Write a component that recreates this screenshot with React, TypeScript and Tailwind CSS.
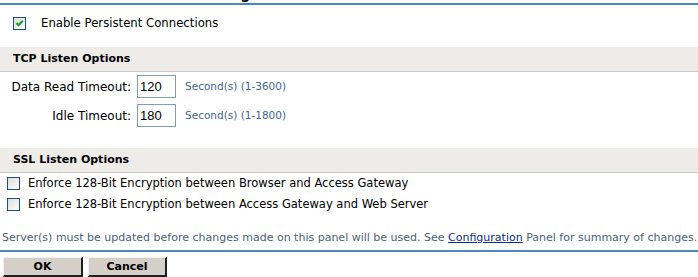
import React from 'react';

const font = { fontFamily: '"DejaVu Sans", Verdana, sans-serif' };

function CheckBox({ checked }: { checked?: boolean }) {
  return (
    <svg width="13" height="13" viewBox="0 0 13 13" className="shrink-0">
      <defs>
        <linearGradient id={checked ? 'cbg1' : 'cbg0'} x1="0" y1="0" x2="1" y2="1">
          <stop offset="0" stopColor="#dcdcd7" />
          <stop offset="1" stopColor="#ffffff" />
        </linearGradient>
      </defs>
      <rect x="0.5" y="0.5" width="12" height="12" fill={`url(#${checked ? 'cbg1' : 'cbg0'})`} stroke="#1c5180" />
      {checked && <path d="M3.5 6 L5.5 8.2 L9.8 3.8" fill="none" stroke="#21a121" strokeWidth="2.2" />}
    </svg>
  );
}

function SectionBar({ title }: { title: string }) {
  return (
    <div className="h-[25px] bg-[#eeece8] border-b border-[#c9c9c9] pl-[13px] flex items-center">
      <span className="text-[11px] font-bold text-black">{title}</span>
    </div>
  );
}

function TimeoutRow({ label, value, hint }: { label: string; value: string; hint: string }) {
  return (
    <div className="flex items-center h-[23px]">
      <span className="w-[131px] text-right text-[12px] text-black">{label}</span>
      <div className="ml-[6px] w-[39px] h-[23px] border border-[#7f9db9] bg-white flex items-center pl-[2px] text-black" style={{ fontFamily: '"Liberation Sans", Arial, sans-serif', fontSize: '13px' }}>
        {value}
      </div>
      <span className="ml-[9px] text-[10.5px] text-[#3f6590]">{hint}</span>
    </div>
  );
}

export default function App() {
  return (
    <div className="w-[698px] h-[277px] overflow-hidden bg-white" style={font}>
      <div className="h-[3px] overflow-hidden">
        <div className="-mt-[16px] pl-[13px] text-[14px] font-bold text-black whitespace-nowrap">Persistent Connection Settings</div>
      </div>
      <div className="h-[2px] bg-[#4a88bd]" />

      <div className="mt-[12px] pl-[13px] flex items-center h-[13px]">
        <CheckBox checked />
        <span className="ml-[15px] text-[11.7px] text-black">Enable Persistent Connections</span>
      </div>

      <div className="mt-[17px]">
        <SectionBar title="TCP Listen Options" />
      </div>

      <div className="mt-[3px] flex flex-col gap-[6px]">
        <TimeoutRow label="Data Read Timeout:" value="120" hint="Second(s) (1-3600)" />
        <TimeoutRow label="Idle Timeout:" value="180" hint="Second(s) (1-1800)" />
      </div>

      <div className="mt-[21px]">
        <SectionBar title="SSL Listen Options" />
      </div>

      <div className="pl-[7px] mt-[4px] flex flex-col gap-[8px]">
        <div className="flex items-center h-[13px]">
          <CheckBox />
          <span className="ml-[8px] text-[11.5px] text-black">Enforce 128-Bit Encryption between Browser and Access Gateway</span>
        </div>
        <div className="flex items-center h-[13px]">
          <CheckBox />
          <span className="ml-[8px] text-[11.5px] text-black">Enforce 128-Bit Encryption between Access Gateway and Web Server</span>
        </div>
      </div>

      <div className="mt-[20px] pl-[2px] text-[11px] text-[#4b5f78] whitespace-nowrap h-[14px] leading-[14px]">
        Server(s) must be updated before changes made on this panel will be used. See{' '}
        <a className="text-[#0b2f8f] underline">Configuration</a> Panel for summary of changes.
      </div>

      <div className="mt-[5px] h-[2px] bg-[#4a88bd]" />

      <div className="mt-[5px] pl-[3px] flex gap-[5px]">
        <button className="w-[80px] h-[20px] bg-[#d4d0c8] border-t border-l border-t-[#f0f0f0] border-l-[#f0f0f0] border-r-2 border-b-2 border-r-[#202020] border-b-[#202020] text-[11px] leading-[16px] font-bold text-black">OK</button>
        <button className="w-[79px] h-[20px] bg-[#d4d0c8] border-t border-l border-t-[#f0f0f0] border-l-[#f0f0f0] border-r-2 border-b-2 border-r-[#202020] border-b-[#202020] text-[11px] leading-[16px] font-bold text-black">Cancel</button>
      </div>
    </div>
  );
}
